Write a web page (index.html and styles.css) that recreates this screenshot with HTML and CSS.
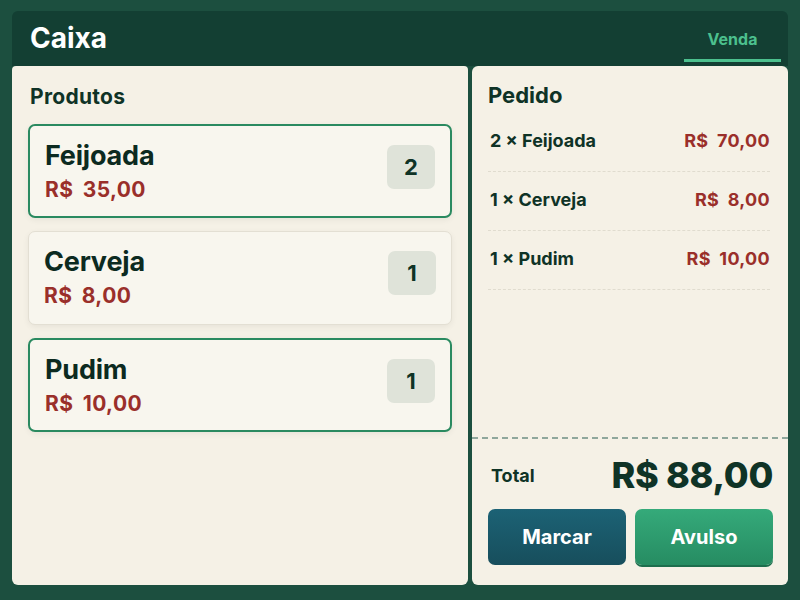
FILE: index.html
```html
<!DOCTYPE html>
<html lang="pt-BR">
<head>
  <meta charset="UTF-8" />
  <meta name="viewport" content="width=device-width, initial-scale=1.0"/>
  <title>Caixa</title>
  <link rel="stylesheet" href="styles.css">
</head>
<body>
  <div class="app">
    <div class="header">
      <div class="title">Caixa</div>
      <div class="tab active">Venda</div>
    </div>
    <div class="main">
      <div class="panel products">
        <h2>Produtos</h2>
        <div class="card selected">
          <div class="info">
            <div class="name">Feijoada</div>
            <div class="price">R$ 35,00</div>
          </div>
          <div class="qty">2</div>
        </div>
        <div class="card">
          <div class="info">
            <div class="name">Cerveja</div>
            <div class="price">R$ 8,00</div>
          </div>
          <div class="qty">1</div>
        </div>
        <div class="card selected">
          <div class="info">
            <div class="name">Pudim</div>
            <div class="price">R$ 10,00</div>
          </div>
          <div class="qty">1</div>
        </div>
      </div>
      <div class="panel order">
        <h2>Pedido</h2>
        <div class="lines">
          <div class="line"><span>2 × Feijoada</span><span class="amount">R$ 70,00</span></div>
          <div class="line"><span>1 × Cerveja</span><span class="amount">R$ 8,00</span></div>
          <div class="line"><span>1 × Pudim</span><span class="amount">R$ 10,00</span></div>
        </div>
        <div class="summary">
          <div class="total">
            <span class="total-label">Total</span>
            <span class="total-value">R$ 88,00</span>
          </div>
          <div class="actions">
            <button class="btn-mark">Marcar</button>
            <button class="btn-single">Avulso</button>
          </div>
        </div>
      </div>
    </div>
  </div>
</body>
</html>
```
FILE: styles.css
```css
  body {
    font-family: "Inter", "Liberation Sans", sans-serif;
    background: #1c4f3f;
    margin: 0;
    width: 800px;
    height: 600px;
    overflow: hidden;
    color: #0f3326;
  }
  .app {
    padding: 11px 12px 15px;
    height: 600px;
    box-sizing: border-box;
    display: flex;
    flex-direction: column;
  }
  .header {
    background: #133f33;
    border-radius: 6px 6px 0 0;
    height: 55px;
    display: flex;
    justify-content: space-between;
    align-items: stretch;
    padding: 0 7px 0 18px;
  }
  .title {
    color: #fff;
    font-size: 28px;
    font-weight: 700;
    align-self: center;
    margin-top: -1px;
  }
  .tab {
    width: 97px;
    text-align: center;
    font-size: 16px;
    font-weight: 700;
    color: #4cc08e;
    padding-top: 18px;
    box-sizing: border-box;
    border-bottom: 3px solid #4cc08e;
    margin-bottom: 4px;
  }
  .main {
    flex: 1;
    display: flex;
    gap: 4px;
  }
  .panel {
    background: #f5f1e6;
    border-radius: 0 0 6px 6px;
    box-sizing: border-box;
  }
  .products {
    width: 456px;
    padding: 18px 16px;
    border-radius: 4px 4px 6px 6px;
  }
  .products h2 {
    margin: 0 0 15px 2px;
    font-size: 21px;
    font-weight: 700;
    letter-spacing: 0.3px;
  }
  .card {
    height: 94px;
    box-sizing: border-box;
    background: #f8f6ee;
    border: 1.5px solid #e3dfd3;
    border-radius: 7px;
    margin-bottom: 13px;
    display: flex;
    justify-content: space-between;
    align-items: flex-start;
    padding: 14px 15px 0 15px;
    box-shadow: 0 2px 6px rgba(0,0,0,0.06);
  }
  .card.selected {
    border: 2px solid #2a8a60;
  }
  .name {
    font-size: 27px;
    font-weight: 700;
    line-height: 32px;
    color: #0c2a20;
    letter-spacing: -0.2px;
  }
  .price {
    font-size: 21px;
    font-weight: 700;
    color: #9a2f2a;
    margin-top: 5px;
    word-spacing: 4px;
    letter-spacing: 0.4px;
  }
  .qty {
    width: 48px;
    height: 44px;
    margin-top: 5px;
    background: #dfe3d9;
    border-radius: 7px;
    display: flex;
    align-items: center;
    justify-content: center;
    font-size: 22px;
    font-weight: 700;
  }
  .order {
    flex: 1;
    display: flex;
    flex-direction: column;
    padding: 16px 0 20px;
    border-radius: 6px 6px 6px 6px;
  }
  .order h2 {
    margin: 0 0 5px 16px;
    font-size: 22px;
    font-weight: 700;
  }
  .lines {
    flex: 1;
    padding: 0 18px 0 16px;
  }
  .line {
    display: flex;
    justify-content: space-between;
    align-items: center;
    height: 59px;
    border-bottom: 1px dashed #e0dccf;
    font-size: 18px;
    font-weight: 700;
    padding: 0 0 4px 2px;
    box-sizing: border-box;
  }
  .amount {
    color: #9a2f2a;
    word-spacing: 4px;
    letter-spacing: 0.3px;
  }
  .summary {
    border-top: 2px dashed #8fa79c;
    padding: 14px 15px 0 16px;
  }
  .total {
    display: flex;
    justify-content: space-between;
    align-items: center;
    margin-bottom: 12px;
  }
  .total-label {
    font-size: 18px;
    font-weight: 700;
    margin-left: 3px;
  }
  .total-value {
    font-size: 36px;
    font-weight: 800;
    letter-spacing: -0.3px;
  }
  .actions {
    display: flex;
    gap: 9px;
  }
  .actions button {
    flex: 1;
    height: 56px;
    border: none;
    border-radius: 7px;
    color: #fff;
    font-family: inherit;
    font-size: 20px;
    font-weight: 700;
    cursor: pointer;
  }
  .btn-mark {
    background: linear-gradient(#1c6275, #174e5c);
  }
  .btn-single {
    background: linear-gradient(#35aa7a, #268c62);
    box-shadow: 0 2px 0 #1d6e4d;
  }
```
